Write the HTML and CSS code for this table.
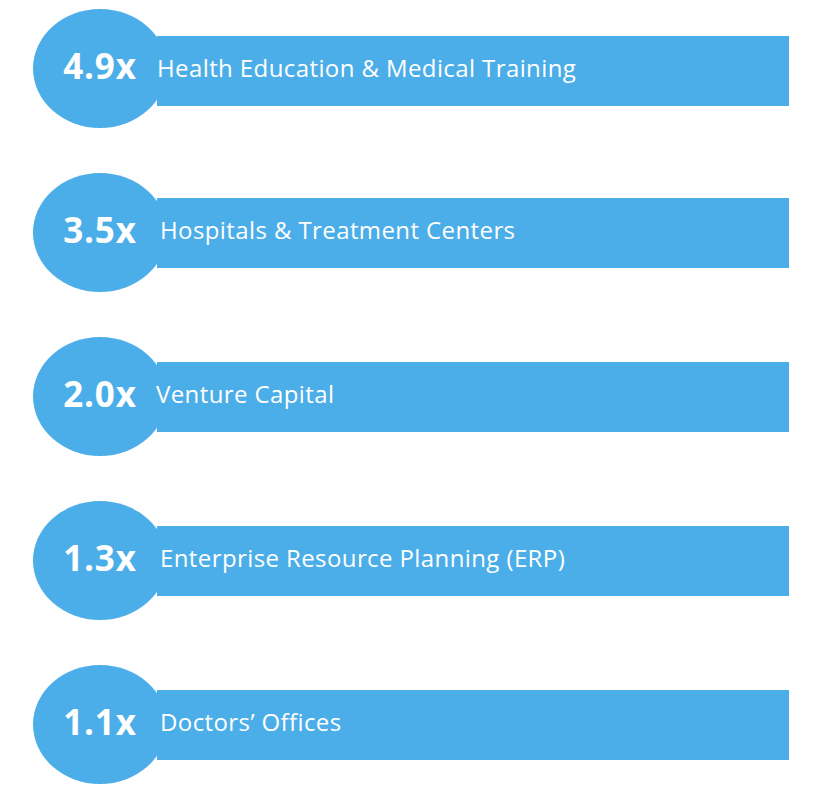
FILE: index.html
```html
<!DOCTYPE html>
<html lang="en">
<head>
<meta charset="utf-8">
<title>Industries</title>
<link rel="stylesheet" href="styles.css">
</head>
<body>
<ul class="list">
  <li class="row row--first">
    <div class="badge">4.9x</div>
    <div class="bar"><span class="label label--r1">Health Education &amp; Medical Training</span></div>
  </li>
  <li class="row">
    <div class="badge">3.5x</div>
    <div class="bar"><span class="label">Hospitals &amp; Treatment Centers</span></div>
  </li>
  <li class="row">
    <div class="badge">2.0x</div>
    <div class="bar"><span class="label label--r3">Venture Capital</span></div>
  </li>
  <li class="row">
    <div class="badge">1.3x</div>
    <div class="bar"><span class="label">Enterprise Resource Planning (ERP)</span></div>
  </li>
  <li class="row">
    <div class="badge">1.1x</div>
    <div class="bar"><span class="label">Doctors’ Offices</span></div>
  </li>
</ul>
</body>
</html>
```

FILE: styles.css
```css
html, body {
  margin: 0;
  padding: 0;
  background: #ffffff;
}

body {
  font-family: "Open Sans", "Liberation Sans", sans-serif;
  color: #ffffff;
}

.list {
  list-style: none;
  margin: 0;
  padding: 9px 0 0 33px;
  width: 756px;
  display: flex;
  flex-direction: column;
  gap: 45px;
}

.row {
  display: flex;
  align-items: center;
  height: 119px;
}

.badge {
  flex: 0 0 134px;
  height: 119px;
  box-sizing: border-box;
  padding-bottom: 7px;
  border-radius: 50%;
  background: #4caee8;
  display: flex;
  align-items: center;
  justify-content: center;
  font-weight: 700;
  font-size: 35px;
  letter-spacing: 0.8px;
}

.bar {
  flex: 1 1 auto;
  height: 70px;
  margin-left: -10px;
  box-sizing: border-box;
  padding: 0 0 6px 3px;
  background: #4caee8;
  display: flex;
  align-items: center;
}

.row--first .bar {
  margin-top: 4px;
}

.label {
  font-size: 24px;
  font-weight: 400;
  letter-spacing: 0.4px;
  white-space: nowrap;
}

.label--r1 {
  margin-left: -3px;
}

.label--r3 {
  margin-left: -4px;
}
```
